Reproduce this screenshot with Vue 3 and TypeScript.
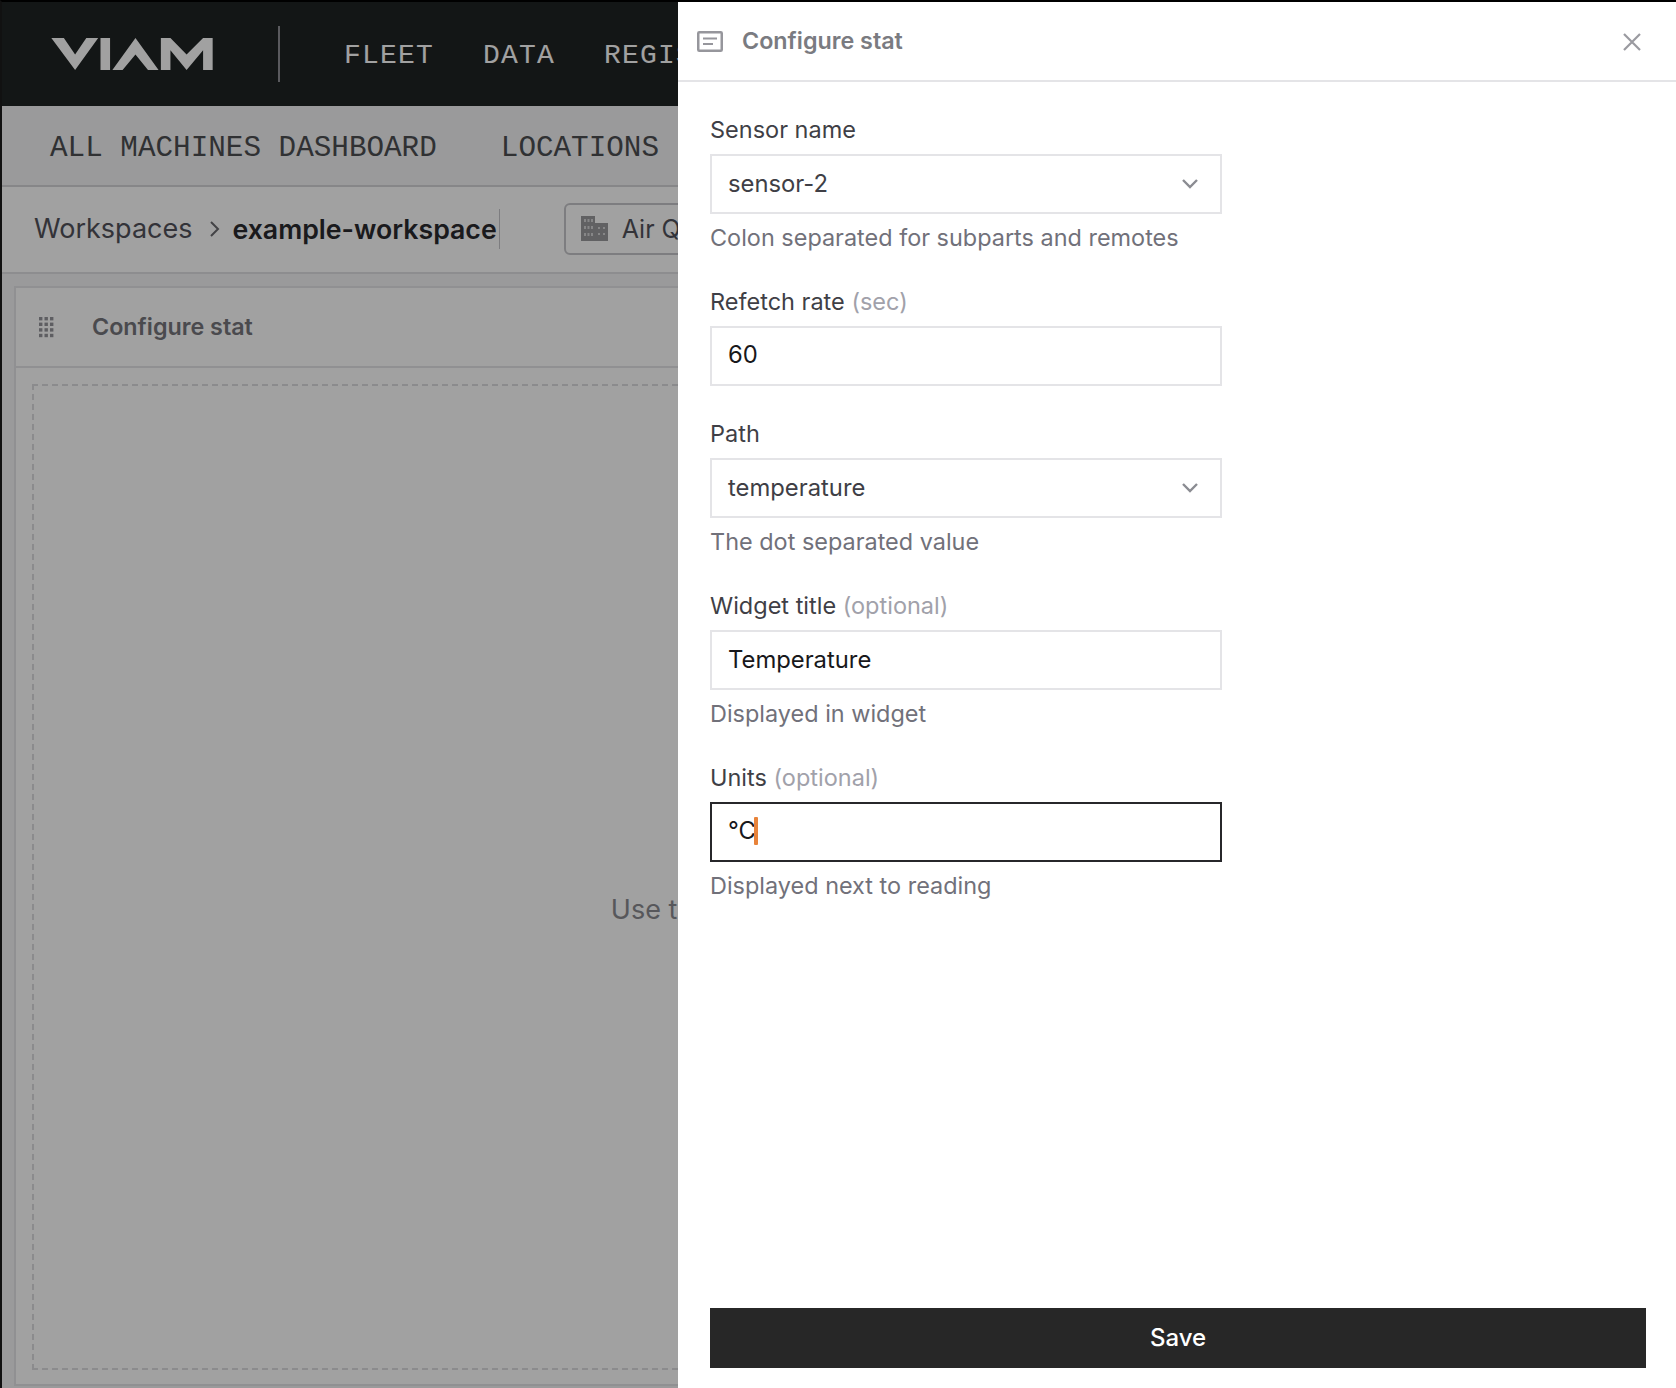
<script setup lang="ts">
type Field = {
  label: string;
  note?: string;
  value: string;
  select?: boolean;
  focused?: boolean;
  hint?: string;
};

const fields: Field[] = [
  { label: "Sensor name", value: "sensor-2", select: true, hint: "Colon separated for subparts and remotes" },
  { label: "Refetch rate", note: "(sec)", value: "60" },
  { label: "Path", value: "temperature", select: true, hint: "The dot separated value" },
  { label: "Widget title", note: "(optional)", value: "Temperature", hint: "Displayed in widget" },
  { label: "Units", note: "(optional)", value: "°C", focused: true, hint: "Displayed next to reading" },
];

// 3 columns by 4 rows
const gripDots = Array.from({ length: 12 }, (_, i) => ({
  x: (i % 3) * 5.5,
  y: Math.floor(i / 3) * 5.6,
}));
</script>

<template>
  <div class="app">
    <div class="page">
      <header class="topbar">
        <svg class="logo" viewBox="62 68 489 97" fill="#fff">
          <polygon points="62,68 100,68 134,118 168,68 204,68 134,165" />
          <rect x="211" y="68" width="29" height="97" />
          <polygon points="317,68 387,165 355,165 317,118 278,165 247,165" />
          <polygon points="394,68 423,68 472,118 522,68 551,68 551,165 522,165 522,105 472,165 423,105 423,165 394,165" />
        </svg>
        <span class="topbar-rule"></span>
        <nav class="topnav">
          <a>FLEET</a>
          <a>DATA</a>
          <a>REGISTRY</a>
        </nav>
      </header>

      <div class="subnav">
        <a>ALL MACHINES DASHBOARD</a>
        <a>LOCATIONS</a>
      </div>

      <div class="crumbs">
        <span class="crumb">Workspaces</span>
        <svg class="crumb-sep" width="12" height="20" viewBox="0 0 12 20" fill="none" stroke="currentColor" stroke-width="2">
          <path d="M2 3l7 7-7 7" />
        </svg>
        <strong class="crumb-current">example-workspace</strong>
        <span class="crumb-rule"></span>
        <div class="chip">
          <svg width="27" height="25" viewBox="0 0 27 25" fill="#9a9a9e">
            <path d="M0 0h14v25H0zM14 7h13v18H14z" />
            <path fill="#d4d4d6" d="M3 3h2v3H3zM6.500 3h2v3h-2zM10 3h2v3h-2zM3 10h2v3H3zM6.500 10h2v3h-2zM10 10h2v3h-2zM3 17h2v3H3zM6.500 17h2v3h-2zM10 17h2v3h-2zM17 11h2v2h-2zM22 11h2v2h-2zM17 17h2v2h-2zM22 17h2v2h-2z" />
          </svg>
          <span>Air Quality</span>
        </div>
      </div>

      <main class="canvas">
        <section class="card">
          <div class="card-head">
            <svg class="grip" width="15" height="21" viewBox="0 0 15 21" fill="#96969b">
              <rect v-for="(d, i) in gripDots" :key="i" :x="d.x" :y="d.y" width="3.400" height="3.400" />
            </svg>
            <span class="card-title">Configure stat</span>
          </div>
          <div class="dropzone">
            <p>Use the widget picker to add widgets</p>
          </div>
        </section>
      </main>
    </div>

    <div class="scrim"></div>

    <aside class="panel">
      <div class="panel-head">
        <svg class="panel-icon" width="26" height="21" viewBox="0 0 26 21" fill="none" stroke="#96969c" stroke-width="2.500">
          <rect x="1.250" y="1.250" width="23.500" height="18.500" rx="1" />
          <path d="M6 7.500h14M6 13h10" stroke-width="2" />
        </svg>
        <h2>Configure stat</h2>
        <svg class="close" width="20" height="20" viewBox="0 0 20 20" fill="none" stroke="#9a9aa0" stroke-width="2.200">
          <path d="M2 2l16 16M18 2L2 18" />
        </svg>
      </div>

      <div class="panel-body">
        <form class="form">
          <div v-for="f in fields" :key="f.label" class="field">
            <label class="label">
              {{ f.label }} <span v-if="f.note" class="note">{{ f.note }}</span>
            </label>
            <div class="control" :class="{ focused: f.focused }">
              <span class="value" :class="{ muted: f.select }">{{ f.value }}</span>
              <span v-if="f.focused" class="caret"></span>
              <svg v-if="f.select" class="chev" width="18" height="11" viewBox="0 0 18 11" fill="none" stroke="#8b8c92" stroke-width="2.400">
                <path d="M2 2l7 7 7-7" />
              </svg>
            </div>
            <p v-if="f.hint" class="hint">{{ f.hint }}</p>
          </div>
        </form>
        <button class="save" type="button">Save</button>
      </div>
    </aside>
  </div>
</template>

<style>
html,
body {
  margin: 0;
  background: #000;
}
</style>

<style scoped>
.app {
  position: relative;
  box-sizing: border-box;
  width: 1676px;
  height: 1388px;
  overflow: hidden;
  border-top: 2px solid #000;
  border-left: 2px solid #111;
  background: #fff;
  font-family: Inter, "Noto Sans", sans-serif;
}

.page {
  display: flex;
  flex-direction: column;
  height: 100%;
}

.topbar {
  display: flex;
  align-items: center;
  flex: none;
  height: 104px;
  padding-left: 48px;
  background: #1f2323;
}

.logo {
  width: 164px;
  height: 32px;
}

.topbar-rule {
  width: 2px;
  height: 56px;
  margin: 0 64px;
  background: #8f8f96;
}

.topnav {
  display: flex;
  gap: 49px;
  margin-top: 2px;
  color: #fff;
  font: 28px "Liberation Mono", monospace;
  letter-spacing: 1.200px;
  white-space: nowrap;
}

.subnav {
  display: flex;
  align-items: center;
  flex: none;
  gap: 64px;
  box-sizing: border-box;
  height: 81px;
  padding: 5px 0 0 48px;
  border-bottom: 2px solid #d4d4d8;
  background: #f4f4f5;
  color: #4c4e52;
  font: 29.300px "Liberation Mono", monospace;
  white-space: nowrap;
}

.crumbs {
  display: flex;
  align-items: center;
  flex: none;
  box-sizing: border-box;
  height: 87px;
  padding: 0 0 2px 32px;
  border-bottom: 2px solid #e0e0e2;
  background: #fff;
  font-size: 27px;
  white-space: nowrap;
}

.crumb {
  color: #52525b;
}

.crumb-sep {
  margin: 0 11px 0 17px;
  color: #6b6b70;
}

.crumb-current {
  color: #2a2a2e;
  font-size: 26.700px;
  font-weight: 600;
}

.crumb-rule {
  width: 1px;
  height: 40px;
  margin: 0 64px 0 2px;
  background: #c7c7cb;
}

.chip {
  display: flex;
  align-items: center;
  gap: 14px;
  box-sizing: border-box;
  height: 52px;
  padding: 0 15px;
  border: 2px solid #c7c7cb;
  border-radius: 6px;
  color: #52525b;
  font-size: 25px;
}

.canvas {
  flex: 1;
  padding: 12px 0 0 12px;
  background: #f4f4f5;
}

.card {
  box-sizing: border-box;
  height: 1100px;
  border: 2px solid #e4e4e7;
  background: #fff;
}

.card-head {
  display: flex;
  align-items: center;
  box-sizing: border-box;
  height: 80px;
  padding-left: 23px;
  border-bottom: 2px solid #e4e4e7;
  color: #76767c;
  font-size: 23.300px;
  font-weight: 600;
}

.card-title {
  margin-top: -2px;
}

.grip {
  margin-right: 38px;
}

.dropzone {
  display: flex;
  align-items: center;
  justify-content: center;
  box-sizing: border-box;
  height: 986px;
  margin: 16px 16px 0;
  padding: 64px 0 0 6px;
  border: 2px dashed #dcdcdf;
}

.dropzone p {
  margin: 0;
  color: #8b8b90;
  font-size: 27px;
  white-space: nowrap;
}

.scrim {
  position: absolute;
  inset: 0;
  background: rgba(0, 0, 0, 0.37);
}

.panel {
  position: absolute;
  top: 0;
  right: 0;
  bottom: 0;
  display: flex;
  flex-direction: column;
  width: 998px;
  background: #fff;
}

.panel-head {
  display: flex;
  align-items: center;
  flex: none;
  box-sizing: border-box;
  height: 80px;
  padding: 0 34px 0 19px;
  border-bottom: 2px solid #e4e4e7;
}

.panel-head h2 {
  flex: 1;
  margin: -2px 0 0 19px;
  color: #7a7b81;
  font-size: 23.300px;
  font-weight: 600;
}

.close {
  margin-top: 2px;
}

.panel-body {
  display: flex;
  flex: 1;
  flex-direction: column;
  padding: 33px 30px 20px 32px;
}

.form {
  display: flex;
  flex: 1;
  flex-direction: column;
  gap: 33.700px;
}

.field {
  width: 512px;
}

.label {
  display: block;
  position: relative;
  top: -1px;
  margin-bottom: 8px;
  color: #3f3f46;
  font-size: 23.500px;
  line-height: 31px;
}

.note {
  color: #a1a1aa;
}

.control {
  display: flex;
  align-items: center;
  box-sizing: border-box;
  height: 60px;
  padding: 0 21px 2px 16px;
  border: 2px solid #e4e4e7;
  color: #18181b;
  font-size: 23.800px;
}

.control.focused {
  border-color: #27272a;
}

.value.muted {
  color: #3f3f46;
}

.caret {
  width: 4px;
  height: 28px;
  margin-left: -2px;
  border-radius: 1px;
  background: #e8833a;
}

.chev {
  margin-left: auto;
}

.hint {
  margin: 8px 0 0;
  color: #71717a;
  font-size: 23.450px;
  line-height: 31px;
}

.save {
  flex: none;
  height: 60px;
  padding-bottom: 2px;
  border: none;
  background: #272727;
  color: #fff;
  font: 500 24px Inter, sans-serif;
}
</style>
